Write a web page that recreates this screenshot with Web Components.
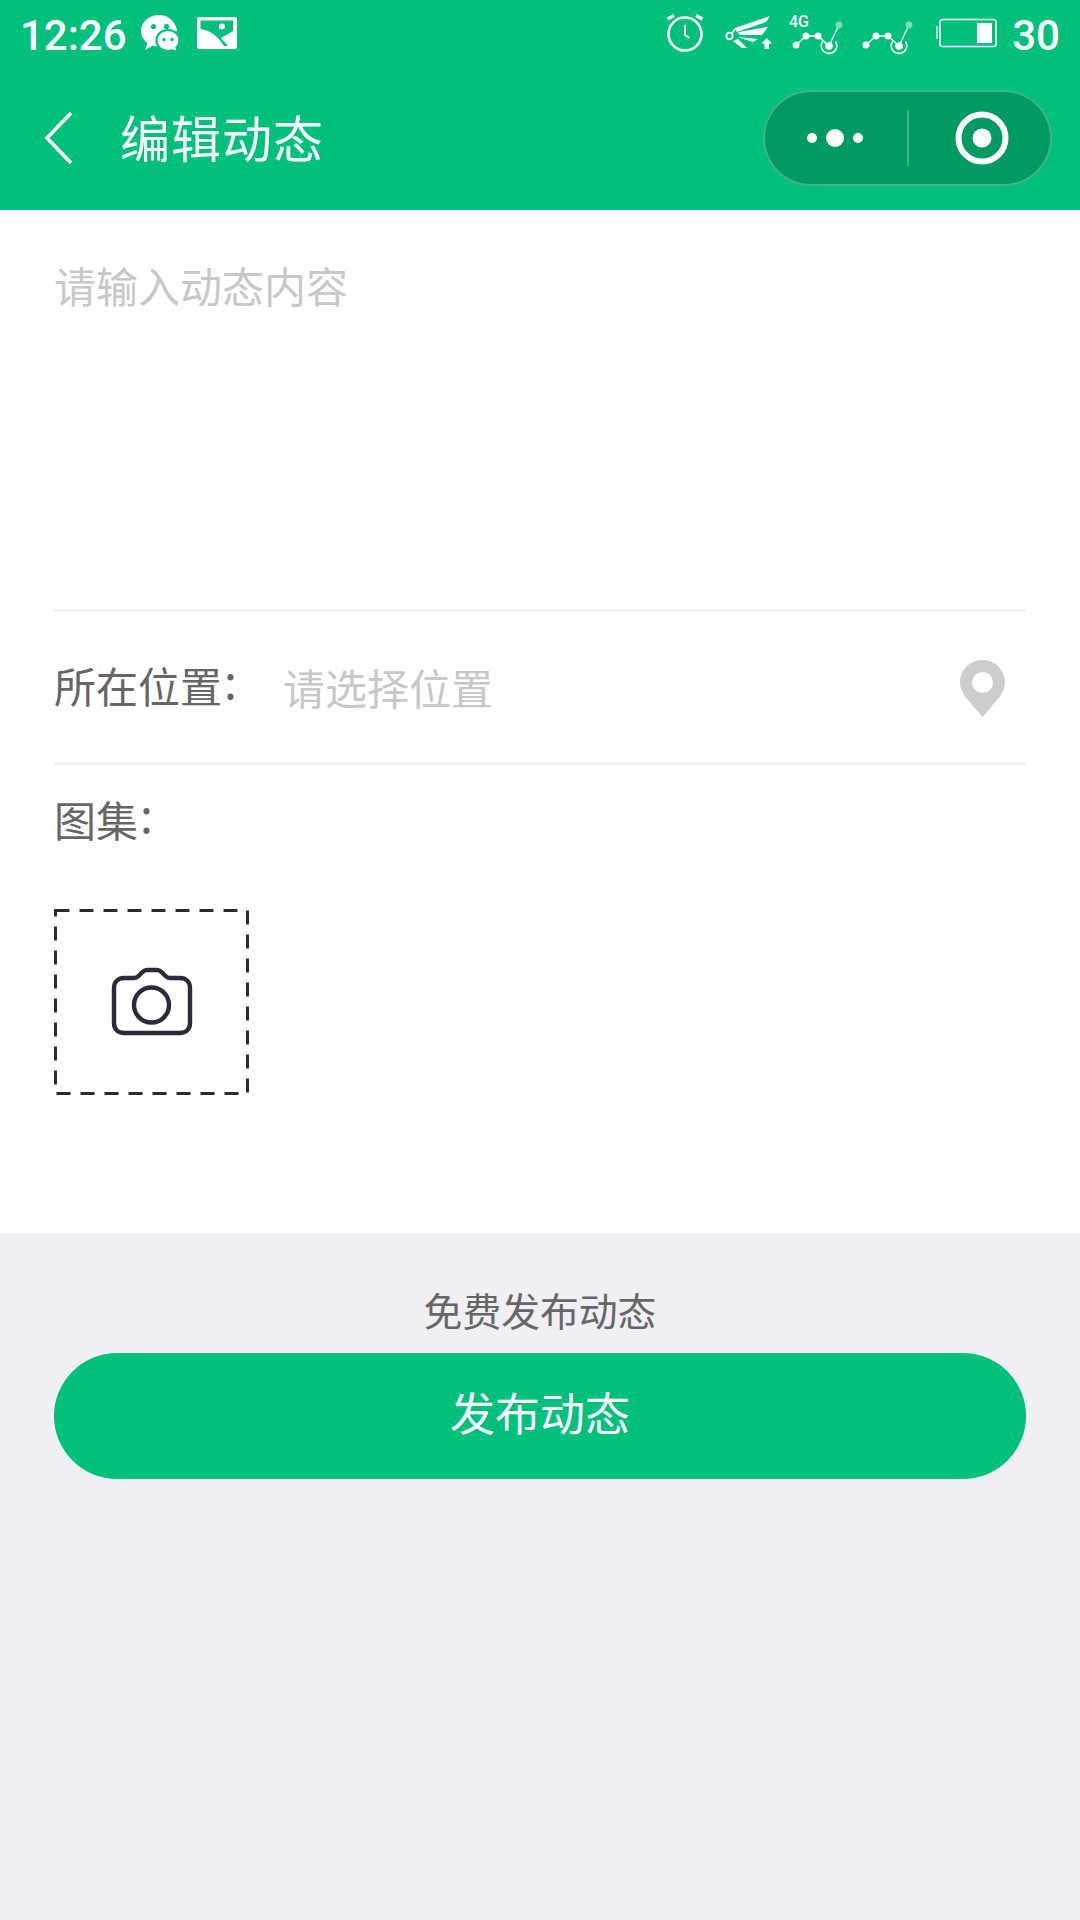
<!DOCTYPE html>
<html lang="zh"><head><meta charset="utf-8"><title>编辑动态</title>
<style>
html,body{margin:0;padding:0}
body{width:1080px;height:1920px;background:#EFEFF4;font-family:"Noto Sans CJK SC","Noto Sans",sans-serif;overflow:hidden}
</style></head><body>
<app-header>
  <status-bar></status-bar>
  <nav-bar title="编辑动态"></nav-bar>
</app-header>
<edit-form>
  <content-input placeholder="请输入动态内容"></content-input>
  <location-row label="所在位置" placeholder="请选择位置"></location-row>
  <gallery-field label="图集"></gallery-field>
</edit-form>
<publish-panel note="免费发布动态" action="发布动态"></publish-panel>
<script>
const def=(name,render)=>customElements.define(name,class extends HTMLElement{
  constructor(){super();this.attachShadow({mode:'open'})}
  connectedCallback(){this.shadowRoot.innerHTML=render(this)}
});
const signal=`<path d="M7 34L17 25H29L40 35L50 14" fill="none" stroke="#fff" stroke-width="1.300"/><circle cx="7" cy="34" r="3.500" fill="#fff"/><circle cx="17" cy="25" r="3.500" fill="#fff"/><circle cx="29" cy="25" r="3.500" fill="#fff"/><circle cx="40" cy="35" r="3.800" fill="#fff"/><path d="M33.500 30.500a7.800 7.800 0 1 0 13 0" fill="none" stroke="#fff" stroke-width="1.500"/><circle cx="50" cy="14" r="3.400" fill="#7CDDB9"/>`;
const colon=`<span style="font-size:48px;line-height:0;margin-left:2px;vertical-align:3px;font-family:'Noto Sans',sans-serif">:</span>`;
def('app-header',()=>`<style>:host{display:block;background:#00C07B;height:210px;color:#fff}</style><slot></slot>`);
def('status-bar',()=>`<style>
:host{display:flex;align-items:center;height:70px;box-sizing:border-box;padding:0 20px 4px;font-family:Roboto,sans-serif;font-size:42px;font-weight:500;color:#fff}
svg{display:block;flex:none;overflow:visible}.sp{flex:1}
.t{line-height:1;padding-top:5px}
</style>
<span class="t">12:26</span>
<svg style="margin-left:14px" width="40" height="38" viewBox="0 0 40 38"><g transform="translate(0 1)"><path fill="#fff" d="M18 0C8 0 0 7 0 16c0 5 2.500 9 6.500 12L4 35l8-4.500c2 .6 4 .9 6 .9 3 0 6-1 8-2l7-12c1.500-1 3-1 3-2C34.500 6 27 0 18 0z"/><path fill="#fff" stroke="#00C07B" stroke-width="2.200" d="M27 15c-6.500 0-11.500 4.500-11.500 10.500S20.500 36 27 36c1.500 0 2.500-.2 4-.6L37 37l-1.500-4.500c2-1.700 3-4.200 3-7C38.500 19.500 33.500 15 27 15z"/><circle cx="12.500" cy="11.500" r="2.600" fill="#00C07B"/><circle cx="25.500" cy="11.500" r="2.600" fill="#00C07B"/><circle cx="23" cy="24.500" r="1.700" fill="#00C07B"/><circle cx="31" cy="24.500" r="1.700" fill="#00C07B"/></g></svg>
<svg style="margin-left:16px" width="40" height="33" viewBox="0 0 40 33"><rect width="40" height="32" rx="2" fill="#fff"/><path fill="#00C07B" d="M3.500 3.500H36V14L24 21l7 8h-4C22 20 13 13 3.500 12z"/><circle cx="25" cy="9.500" r="3" fill="#fff"/></svg>
<span class="sp"></span>
<svg width="38" height="38" viewBox="0 0 38 38" fill="none" stroke="#fff"><circle cx="18" cy="20" r="16.500" stroke-width="2.600"/><path d="M18 11v10l4.500 3" stroke-width="2"/><path d="M.5 5L7 1.500M35.500 5L29 1.500" stroke-width="3.200"/></svg>
<svg style="margin-left:20px" width="48" height="36" viewBox="0 0 48 36" fill="#fff"><path d="M10 13L45 1l-4 6-29 10zM12.500 17.300L43 11.700 37 20H15zM12 22l21 2-5 3zM8 26l5-2 9 9h-5z"/><circle cx="4.500" cy="21" r="3.200" fill="none" stroke="#fff" stroke-width="1.900"/><path d="M6.500 18.500L11 13" stroke="#fff" stroke-width="1.600"/><path d="M41.700 23l5.300 5.500h-3.100V34h-4.400v-5.500h-3.100z"/></svg>
<svg style="margin-left:16px" width="56" height="44" viewBox="0 0 56 44"><text x="0" y="16" font-family="Roboto,sans-serif" font-size="16" font-weight="500" fill="#fff">4G</text>${signal}</svg>
<svg style="margin-left:14px" width="56" height="44" viewBox="0 0 56 44">${signal}</svg>
<svg style="margin-left:21px" width="61" height="30" viewBox="0 0 61 30"><rect x="0" y="8" width="2" height="13" fill="#9fe6c8"/><rect x="4" y="1.500" width="56" height="27" rx="2.500" fill="none" stroke="#fff" stroke-width="1.600"/><rect x="41" y="5" width="15" height="20" fill="#fff"/></svg>
<span class="t" style="margin-left:15px">30</span>`);
def('nav-bar',el=>`<style>
:host{display:flex;align-items:center;height:140px;color:#fff}
svg{display:block}
.b{margin-left:44px;flex:none;margin-top:-4px}
.t{margin-left:46px;font-size:50px;line-height:1;letter-spacing:1px;flex:1;margin-top:-8px}
capsule-menu{margin-right:28px}
</style>
<svg class="b" width="30" height="54" viewBox="0 0 30 54" fill="none" stroke="#fff" stroke-width="3.600"><path d="M27 2L3 27l24 25"/></svg>
<span class="t">${el.getAttribute('title')}</span>
<capsule-menu></capsule-menu>`);
def('capsule-menu',()=>`<style>
:host{display:grid;grid-template-columns:1fr 2px 1fr;align-items:center;width:289px;height:96px;box-sizing:border-box;border:2px solid rgba(255,255,255,.25);border-radius:48px;background:#009A62;margin-top:-4px}
svg{display:block;justify-self:center}
.d{margin-right:2px}
.c{margin-left:6px}
i{display:block;width:2px;height:56px;background:rgba(255,255,255,.25)}
</style>
<svg class="d" width="60" height="20" viewBox="0 0 60 20" fill="#fff"><circle cx="7" cy="10" r="5"/><circle cx="30" cy="10" r="9"/><circle cx="53" cy="10" r="5"/></svg>
<i></i>
<svg class="c" width="54" height="54" viewBox="0 0 54 54"><circle cx="27" cy="27" r="23.500" fill="none" stroke="#fff" stroke-width="6"/><circle cx="27" cy="27" r="9.500" fill="#fff"/></svg>`);
def('edit-form',()=>`<style>:host{display:block;background:#fff;height:1023px;box-sizing:border-box;padding:0 54px}</style><slot></slot>`);
def('content-input',el=>`<style>
:host{display:block;box-sizing:border-box;padding-top:50px;border-bottom:3px solid #f2f2f2;height:402px;font-size:42px;line-height:50px;color:#c8c8c8}
</style>${el.getAttribute('placeholder')}`);
def('location-row',el=>`<style>
:host{display:flex;align-items:center;height:153px;box-sizing:border-box;border-bottom:3px solid #f2f2f2;font-size:42px;line-height:50px}
.l{color:#666;width:229px;flex:none;margin-top:-4px}
.p{color:#c8c8c8;flex:1}
svg{display:block;margin-right:21px;margin-top:3px}
</style><span class="l">${el.getAttribute('label')}${colon}</span><span class="p">${el.getAttribute('placeholder')}</span>
<svg width="45" height="57" viewBox="0 0 45 57"><path fill-rule="evenodd" fill="#cdcdcd" d="M22.500 0C10 0 0 10 0 22.500c0 5 2 9 5 14L22.500 57 40 36.500c3-5 5-9 5-14C45 10 35 0 22.500 0zm0 12a10.500 10.500 0 1 1 0 21 10.500 10.500 0 0 1 0-21z"/></svg>`);
def('gallery-field',el=>`<style>
:host{display:block;padding-top:29px;font-size:42px;line-height:50px;color:#666}
upload-box{margin-top:65px}
</style><div>${el.getAttribute('label')}${colon}</div><upload-box></upload-box>`);
def('upload-box',()=>`<style>
:host{display:block;width:195px;height:186px}
svg{display:block}
</style>
<svg width="195" height="186" viewBox="0 0 195 186" fill="none" stroke="#2b2b3a">
<rect x="1.500" y="1.500" width="192" height="183" stroke-width="3" stroke-dasharray="14 10"/>
<path stroke-width="4.400" stroke-linejoin="round" d="M70 69h10c2 0 3-.5 4.500-2l4-4c1.500-1.500 2.500-2 4.500-2h10c2 0 3 .5 4.500 2l4 4c1.500 1.500 2.500 2 4.500 2h10c6 0 10 4 10 10v35c0 6-4 10-10 10H70c-6 0-10-4-10-10V79c0-6 4-10 10-10z"/>
<circle cx="97.500" cy="96" r="17.500" stroke-width="4.400"/></svg>`);
def('publish-panel',el=>`<style>
:host{display:flex;flex-direction:column;align-items:center;padding:52px 54px 0}
.n{font-size:38.800px;line-height:48px;color:#666}
.b{align-self:stretch;margin-top:20px;height:126px;border-radius:63px;background:#00C07B;color:#fff;font-size:45px;display:flex;align-items:center;justify-content:center;padding-bottom:10px;box-sizing:border-box}
</style><div class="n">${el.getAttribute('note')}</div><div class="b">${el.getAttribute('action')}</div>`);
</script>
</body></html>
